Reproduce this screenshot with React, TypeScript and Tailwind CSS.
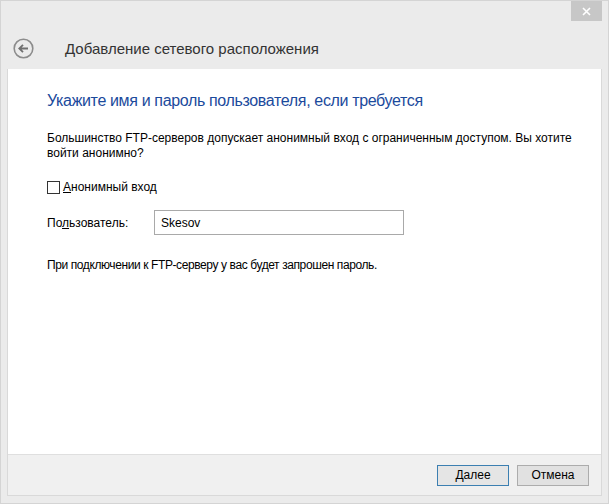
import React from "react";

const font = { fontFamily: '"Segoe UI", "Liberation Sans", sans-serif' };

export default function App() {
  return (
    <div
      className="w-[609px] h-[504px] bg-[#ebebeb] border border-[#d4d4d4] flex flex-col box-border"
      style={font}
    >
      {/* title area */}
      <div className="relative h-[68px] shrink-0">
        <div className="absolute right-[6px] top-0 w-[31px] h-[20px] bg-[#c7c7c7] flex items-center justify-center">
          <svg width="9" height="9" viewBox="0 0 9 9">
            <path d="M1 1 L8 8 M8 1 L1 8" stroke="#ffffff" strokeWidth="1.6" />
          </svg>
        </div>
        <div className="flex items-center h-full pt-[26px] pl-[12px]">
          <svg width="21" height="21" viewBox="0 0 21 21">
            <circle cx="10.5" cy="10.5" r="9.3" fill="none" stroke="#8c8c8c" strokeWidth="1.6" />
            <path d="M15 10.5 H6.5 M10 6.8 L6.3 10.5 L10 14.2" fill="none" stroke="#707070" strokeWidth="1.8" />
          </svg>
          <span className="ml-[31px] text-[15px] text-[#333333] leading-none">
            Добавление сетевого расположения
          </span>
        </div>
      </div>

      {/* client area */}
      <div className="flex-1 mx-[6px] flex flex-col border-x border-b border-[#d9d9d9]">
        <div className="flex-1 bg-white pl-[39px] pt-[21px] text-[12px] text-black">
          <div className="text-[16px] text-[#1b4a9c] leading-[22px] tracking-[-0.35px]">
            Укажите имя и пароль пользователя, если требуется
          </div>
          <div className="mt-[19px] leading-[15px] pr-[27px]">
            Большинство FTP-серверов допускает анонимный вход с ограниченным доступом. Вы хотите войти анонимно?
          </div>
          <label className="mt-[18px] flex items-center">
            <span className="w-[13px] h-[13px] border border-[#333333] bg-white inline-block" />
            <span className="ml-[3px] leading-[16px]">
              <span className="underline">А</span>нонимный вход
            </span>
          </label>
          <div className="mt-[15px] flex items-center">
            <span className="w-[107px]">
              По<span className="underline">л</span>ьзователь:
            </span>
            <div className="w-[250px] h-[25px] border border-[#a9a9a9] flex items-center pl-[6px]">
              Skesov
            </div>
          </div>
          <div className="mt-[22px] leading-[16px] tracking-[-0.4px]">
            При подключении к FTP-серверу у вас будет запрошен пароль.
          </div>
        </div>
        <div className="h-[41px] shrink-0 bg-[#f0f0f0] border-t border-[#dfdfdf] flex items-center justify-end pr-[12px] gap-[8px] text-[12px]">
          <div className="w-[72px] h-[21px] border border-[#3c7fb1] bg-[#e5e5e5] flex items-center justify-center text-black">
            <span>
              <span className="underline">Д</span>алее
            </span>
          </div>
          <div className="w-[72px] h-[21px] border border-[#acacac] bg-[#e1e1e1] flex items-center justify-center text-black">
            Отмена
          </div>
        </div>
      </div>
      <div className="h-[7px] shrink-0" />
    </div>
  );
}
